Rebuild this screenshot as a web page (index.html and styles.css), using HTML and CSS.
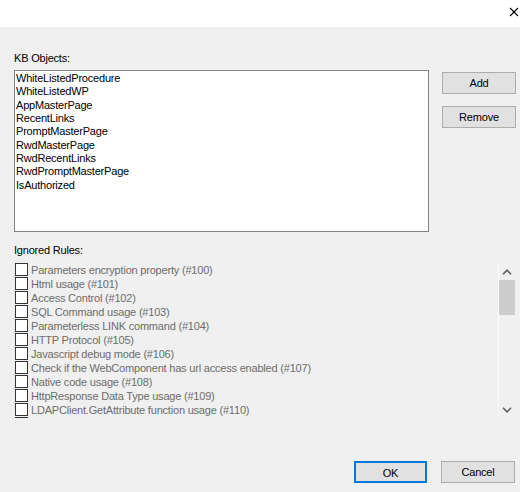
FILE: index.html
```html
<!DOCTYPE html>
<html>
<head>
<meta charset="utf-8">
<link rel="stylesheet" href="styles.css">
</head>
<body>
<div class="dialog">
  <div class="titlebar">
    <svg class="close" width="10" height="10" viewBox="0 0 10 10"><path d="M1 1L9 9M9 1L1 9" stroke="#000" stroke-width="1.1" fill="none"/></svg>
  </div>
  <div class="body">
    <div class="label">KB Objects:</div>
    <div class="kb-row">
      <div class="listbox">
        <div class="item">WhiteListedProcedure</div>
        <div class="item">WhiteListedWP</div>
        <div class="item">AppMasterPage</div>
        <div class="item">RecentLinks</div>
        <div class="item">PromptMasterPage</div>
        <div class="item">RwdMasterPage</div>
        <div class="item">RwdRecentLinks</div>
        <div class="item">RwdPromptMasterPage</div>
        <div class="item">IsAuthorized</div>
      </div>
      <div class="side-buttons">
        <button class="btn">Add</button>
        <button class="btn">Remove</button>
      </div>
    </div>
    <div class="label label-rules">Ignored Rules:</div>
    <div class="rules-row">
      <div class="rules">
        <div class="rule"><span class="check"></span><span>Parameters encryption property (#100)</span></div>
        <div class="rule"><span class="check"></span><span>Html usage (#101)</span></div>
        <div class="rule"><span class="check"></span><span>Access Control (#102)</span></div>
        <div class="rule"><span class="check"></span><span>SQL Command usage (#103)</span></div>
        <div class="rule"><span class="check"></span><span>Parameterless LINK command (#104)</span></div>
        <div class="rule"><span class="check"></span><span>HTTP Protocol (#105)</span></div>
        <div class="rule"><span class="check"></span><span>Javascript debug mode (#106)</span></div>
        <div class="rule"><span class="check"></span><span>Check if the WebComponent has url access enabled (#107)</span></div>
        <div class="rule"><span class="check"></span><span>Native code usage (#108)</span></div>
        <div class="rule"><span class="check"></span><span>HttpResponse Data Type usage (#109)</span></div>
        <div class="rule"><span class="check"></span><span>LDAPClient.GetAttribute function usage (#110)</span></div>
        <div class="rule"><span class="check"></span></div>
      </div>
      <div class="scrollbar">
        <div class="arrow">
          <svg width="10" height="6" viewBox="0 0 10 6"><path d="M1 5.2L5 1.2L9 5.2" stroke="#606060" stroke-width="1.6" fill="none"/></svg>
        </div>
        <div class="thumb"></div>
        <div class="track"></div>
        <div class="arrow">
          <svg width="10" height="6" viewBox="0 0 10 6"><path d="M1 0.8L5 4.8L9 0.8" stroke="#606060" stroke-width="1.6" fill="none"/></svg>
        </div>
      </div>
    </div>
    <div class="footer">
      <button class="btn btn-ok">OK</button>
      <button class="btn btn-cancel">Cancel</button>
    </div>
  </div>
</div>
</body>
</html>
```
FILE: styles.css
```css
html, body {
  margin: 0;
  padding: 0;
}
body {
  width: 520px;
  height: 492px;
  overflow: hidden;
  background: #f0f0f0;
  font-family: "Liberation Sans", Arial, sans-serif;
  font-size: 11px;
  letter-spacing: -0.2px;
  color: #000;
}
.dialog {
  width: 520px;
  height: 492px;
  display: flex;
  flex-direction: column;
}
.titlebar {
  height: 27px;
  background: #fff;
  display: flex;
  justify-content: flex-end;
  align-items: flex-start;
}
.close {
  margin-top: 7px;
  margin-right: 1px;
}
.body {
  padding: 25px 4px 0 14px;
  display: flex;
  flex-direction: column;
}
.label {
  line-height: 13px;
  height: 13px;
}
.kb-row {
  margin-top: 5px;
  display: flex;
  align-items: flex-start;
}
.listbox {
  flex: none;
  width: 412px;
  height: 159px;
  border: 1px solid #828282;
  background: #fff;
  padding: 1px 0 0 1px;
  box-sizing: content-box;
}
.item {
  line-height: 13.33px;
  height: 13.33px;
  white-space: nowrap;
}
.side-buttons {
  margin-left: 13px;
  margin-top: 2px;
  display: flex;
  flex-direction: column;
  gap: 12px;
}
.btn {
  font-family: inherit;
  font-size: 11px;
  letter-spacing: -0.2px;
  color: #000;
  background: #e1e1e1;
  border: 1px solid #adadad;
  height: 22px;
  width: 74px;
  padding: 0;
  margin: 0;
  box-sizing: border-box;
  line-height: 20px;
}
.label-rules {
  margin-top: 12px;
}
.rules-row {
  margin-top: 6px;
  display: flex;
  height: 155px;
}
.rules {
  flex: none;
  width: 484px;
  height: 155px;
  overflow: hidden;
  color: #6d6d6d;
}
.rule {
  height: 14px;
  display: flex;
  align-items: flex-start;
  white-space: nowrap;
  line-height: 14px;
}
.check {
  width: 13px;
  height: 13px;
  box-sizing: border-box;
  border: 1px solid #333;
  background: #fff;
  margin-left: 1px;
  margin-right: 3px;
  flex: none;
}
.scrollbar {
  flex: none;
  width: 16px;
  border-left: 1px solid #fafafa;
  background: #f0f0f0;
  display: flex;
  flex-direction: column;
}
.arrow {
  height: 17px;
  display: flex;
  align-items: center;
  justify-content: center;
}
.thumb {
  height: 35px;
  background: #cdcdcd;
}
.track {
  flex: 1;
}
.footer {
  margin-top: 43px;
  margin-right: 1px;
  display: flex;
  justify-content: flex-end;
  gap: 14px;
}
.btn-ok {
  width: 73px;
  border: 2px solid #0078d7;
}
.btn-cancel {
  width: 74px;
}
```
